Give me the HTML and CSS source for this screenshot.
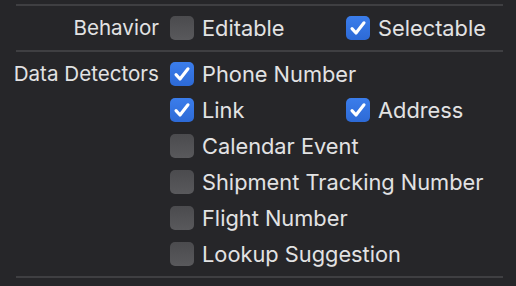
FILE: index.html
```html
<!DOCTYPE html>
<html>
<head>
<meta charset="utf-8">
<link rel="stylesheet" href="styles.css">
</head>
<body>
<div class="panel">
  <div class="divider"></div>
  <div class="section">
    <div class="label">Behavior</div>
    <div class="item c2"><span class="cb"></span><span class="text">Editable</span></div>
    <div class="item c3"><span class="cb on"><svg viewBox="0 0 24 24"><path d="M6 12.6 L10 17 L18 6.8"/></svg></span><span class="text">Selectable</span></div>
  </div>
  <div class="divider"></div>
  <div class="section">
    <div class="label">Data Detectors</div>
    <div class="item wide"><span class="cb on"><svg viewBox="0 0 24 24"><path d="M6 12.6 L10 17 L18 6.8"/></svg></span><span class="text">Phone Number</span></div>
    <div class="item c2"><span class="cb on"><svg viewBox="0 0 24 24"><path d="M6 12.6 L10 17 L18 6.8"/></svg></span><span class="text">Link</span></div>
    <div class="item c3"><span class="cb on"><svg viewBox="0 0 24 24"><path d="M6 12.6 L10 17 L18 6.8"/></svg></span><span class="text">Address</span></div>
    <div class="item wide"><span class="cb"></span><span class="text">Calendar Event</span></div>
    <div class="item wide"><span class="cb"></span><span class="text">Shipment Tracking Number</span></div>
    <div class="item wide"><span class="cb"></span><span class="text">Flight Number</span></div>
    <div class="item wide"><span class="cb"></span><span class="text">Lookup Suggestion</span></div>
  </div>
  <div class="divider"></div>
</div>
</body>
</html>
```
FILE: styles.css
```css
html, body {
  margin: 0;
  padding: 0;
  background: #262629;
}
body {
  font-family: Inter, "Noto Sans", sans-serif;
  font-size: 21.8px;
  color: #e2e2e3;
  width: 516px;
  height: 286px;
  overflow: hidden;
}
.panel {
  padding: 4px 13px 0 16px;
}
.divider {
  height: 2px;
  background: #3f3f42;
}
.section {
  display: grid;
  grid-template-columns: 143px 187px 1fr;
  row-gap: 12px;
  padding: 10px 0 10px;
}
.label {
  grid-column: 1;
  display: flex;
  justify-content: flex-end;
  height: 24px;
  line-height: 24px;
  font-size: 20.6px;
  white-space: nowrap;
}
.item {
  display: flex;
  align-items: center;
  gap: 8px;
  height: 24px;
  white-space: nowrap;
}
.item.c2 {
  grid-column: 2;
  padding-left: 11px;
}
.item.wide {
  grid-column: 2 / 4;
  padding-left: 11px;
}
.item.c3 {
  grid-column: 3;
}
.text {
  line-height: 24px;
}
.cb {
  flex: none;
  width: 24px;
  height: 24px;
  border-radius: 5px;
  background: linear-gradient(#4b4b4e, #59595c);
  display: flex;
}
.cb.on {
  background: linear-gradient(#3b7deb, #2d6ad6);
}
.cb svg {
  width: 24px;
  height: 24px;
}
.cb path {
  fill: none;
  stroke: #ffffff;
  stroke-width: 3.1;
  stroke-linecap: round;
  stroke-linejoin: round;
}
```
